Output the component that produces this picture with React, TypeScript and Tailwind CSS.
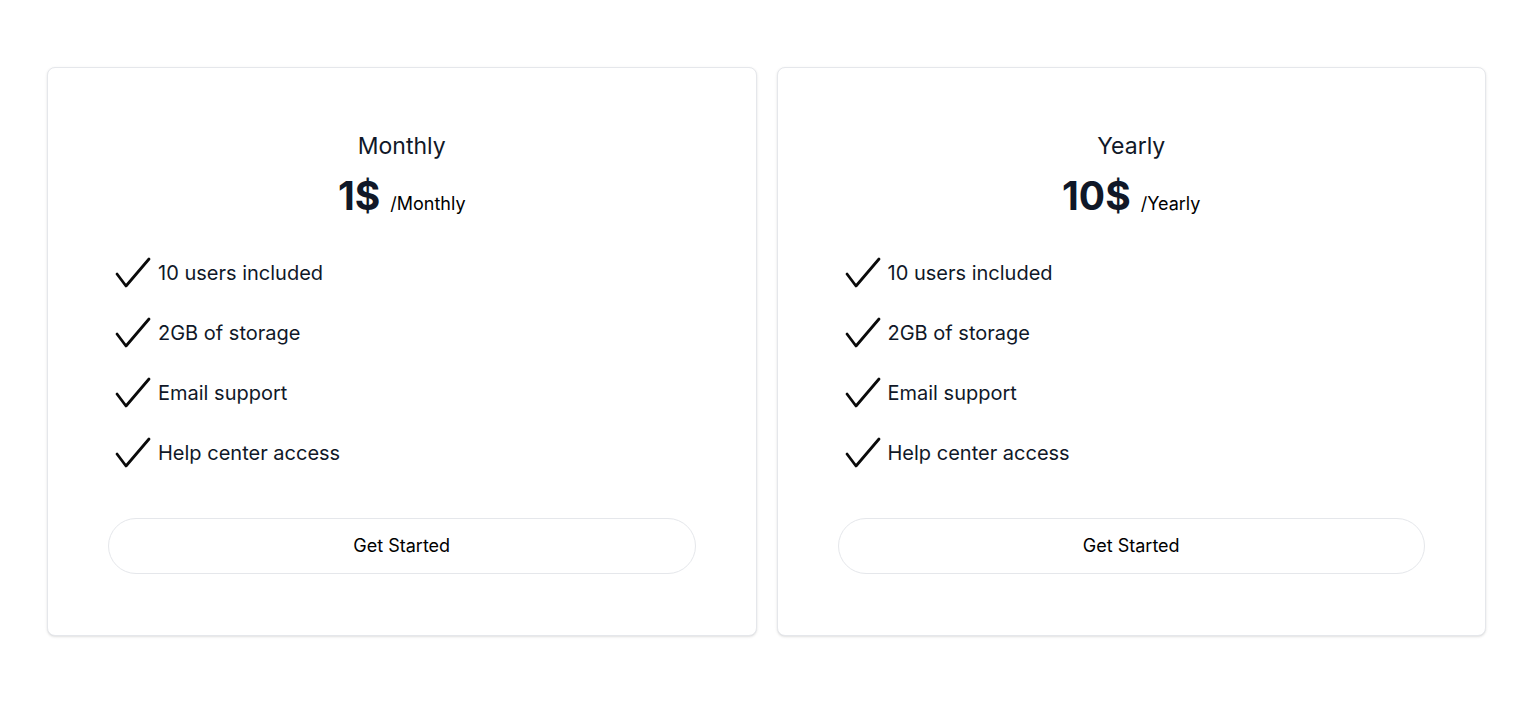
import React from "react"

type Plan = { name: string; price: string; period: string }

const plans: Plan[] = [
  { name: "Monthly", price: "1$", period: "/Monthly" },
  { name: "Yearly", price: "10$", period: "/Yearly" },
]

const features = ["10 users included", "2GB of storage", "Email support", "Help center access"]

function Check() {
  return (
    <svg width="36" height="34" viewBox="0 0 36 34" fill="none" className="shrink-0">
      <path d="M2 18 L11 30 L34 3" stroke="#0b0b0b" strokeWidth="2.8" strokeLinecap="round" strokeLinejoin="round" />
    </svg>
  )
}

function PlanCard({ plan }: { plan: Plan }) {
  return (
    <div className="flex flex-1 flex-col rounded-lg border border-gray-200 bg-white px-[60px] pt-16 pb-[61px] shadow-sm">
      <div className="flex flex-col items-center">
        <h3 className="text-[23px] leading-7 text-gray-900">{plan.name}</h3>
        <div className="mt-4 flex h-10 items-baseline gap-2.5">
          <span className="text-[39px] font-bold leading-10 text-gray-900">{plan.price}</span>
          <span className="text-lg text-black">{plan.period}</span>
        </div>
      </div>
      {/* Features */}
      <ul className="mt-[39px] flex flex-col gap-6 px-[7px]">
        {features.map((f) => (
          <li key={f} className="flex h-9 items-center gap-[7px]">
            <Check />
            <span className="text-xl text-gray-900">{f}</span>
          </li>
        ))}
      </ul>
      <button className="mt-[47px] h-14 w-full rounded-full border border-gray-200 bg-white text-lg text-black">
        Get Started
      </button>
    </div>
  )
}

export default function App() {
  return (
    <div className="min-h-screen bg-white pl-[47px] pr-[45px] pt-[67px]" style={{ fontFamily: "Inter, 'Noto Sans', sans-serif" }}>
      <div className="flex gap-5">
        {plans.map((p) => (
          <PlanCard key={p.name} plan={p} />
        ))}
      </div>
    </div>
  )
}
